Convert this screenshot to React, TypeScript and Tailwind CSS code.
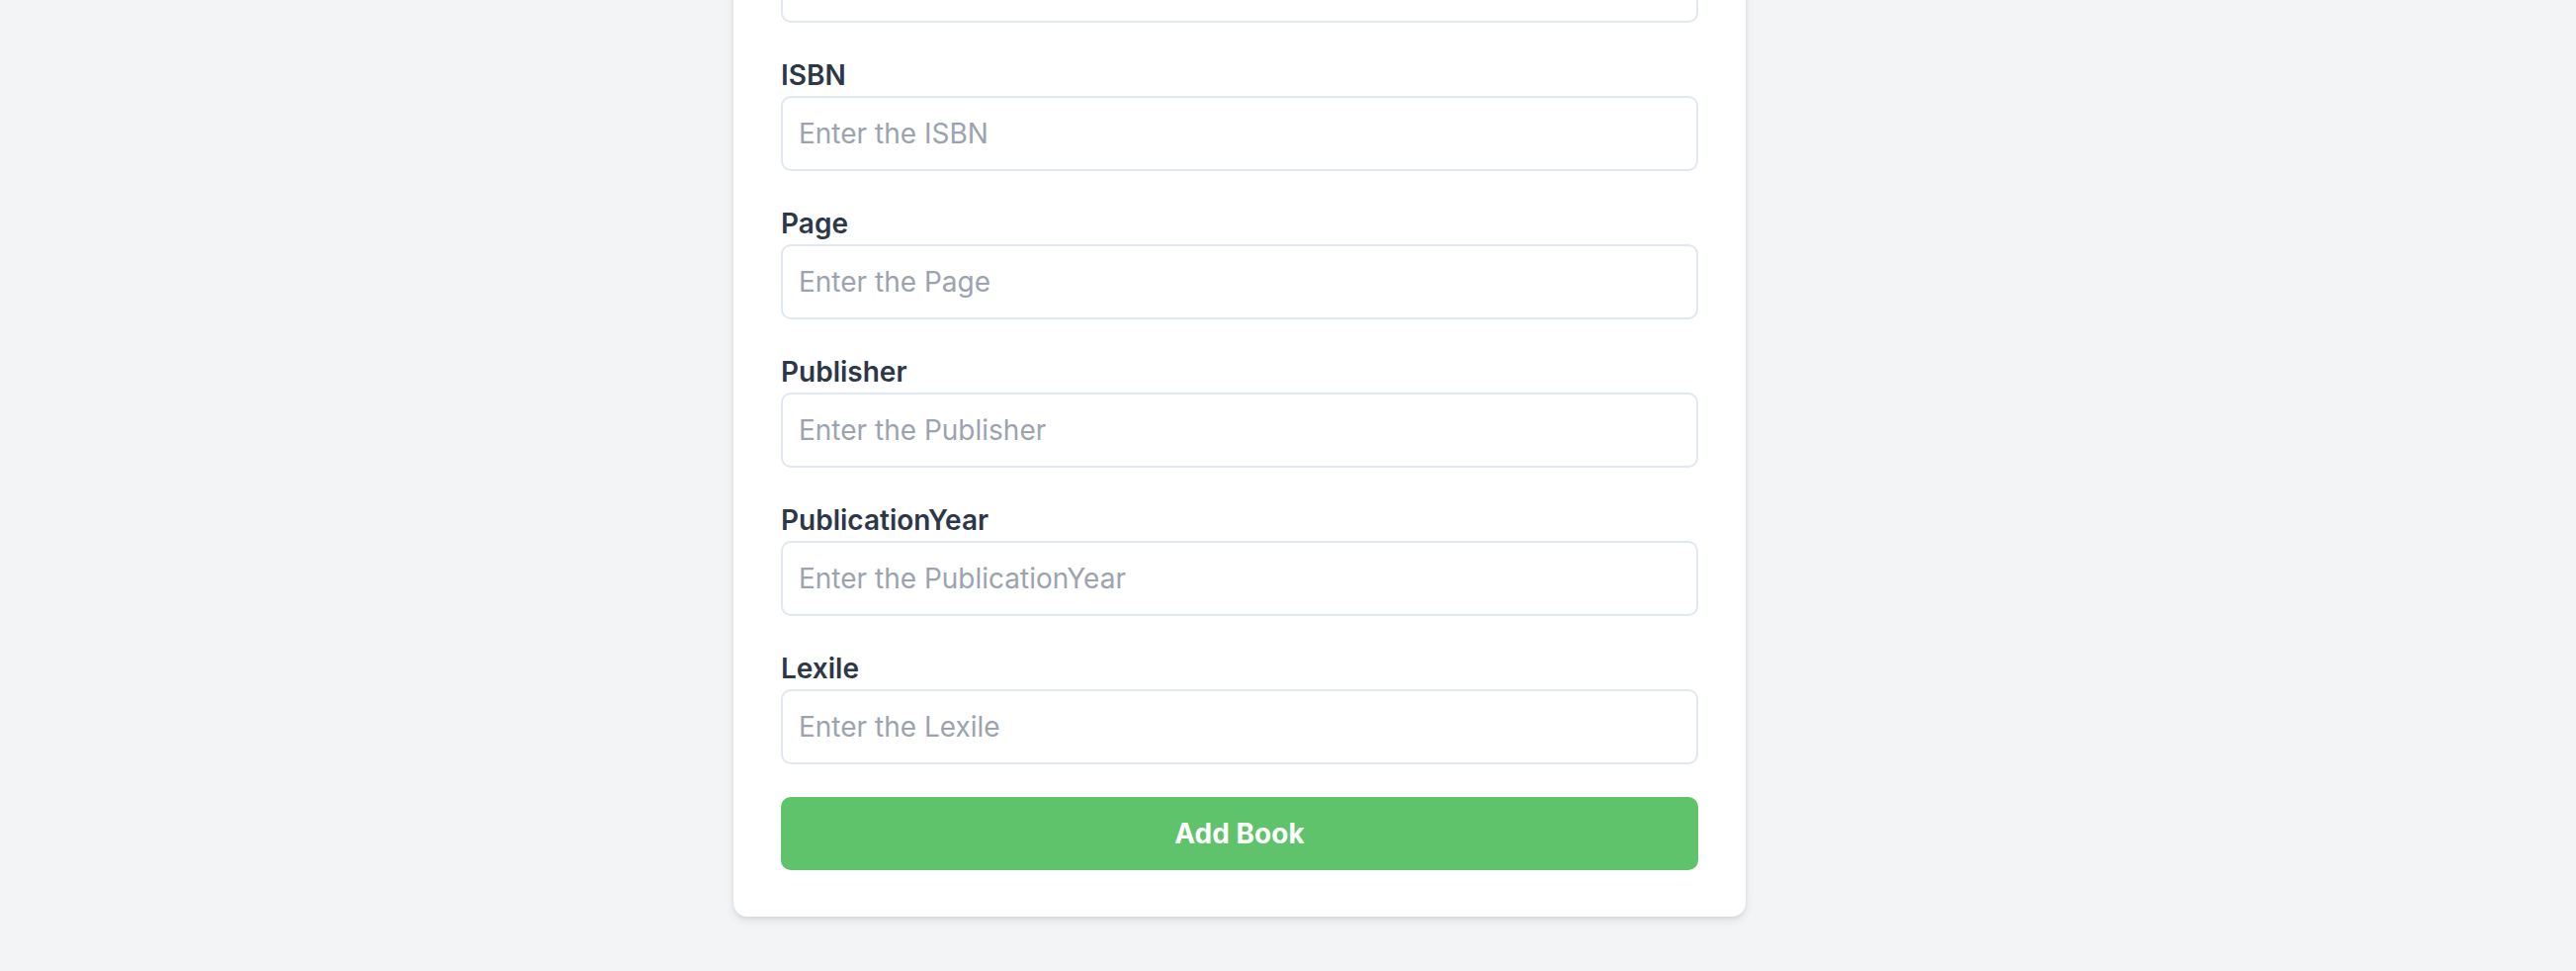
import React from 'react';

const fields = ['ISBN', 'Page', 'Publisher', 'PublicationYear', 'Lexile'];

const App: React.FC = () => {
  return (
    <div
      className="min-h-screen bg-[#f3f4f6] overflow-hidden"
      style={{ fontFamily: 'Inter, "Noto Sans", sans-serif' }}
    >
      <div className="ml-[742px] w-[1024px] -mt-[139px] mb-[55px]">
        <form className="bg-white rounded-[14px] shadow-[0_4px_10px_rgba(0,0,0,0.08),0_2px_4px_rgba(0,0,0,0.06)] px-12 pt-12 pb-[47px]">
          <div className="flex flex-col gap-[36px]">
            {/* scrolled out of view */}
            <div>
              <label className="block text-[28px] leading-[34px] font-semibold text-[#2d3748] mb-1">
                Author
              </label>
              <input
                type="text"
                className="w-full h-[76px] border-2 border-[#e2e8f0] rounded-[10px] px-4 text-[28px] outline-none"
              />
            </div>
            {fields.map((field) => (
              <div key={field}>
                <label className="block text-[28px] leading-[34px] font-semibold text-[#2d3748] mb-1">
                  {field}
                </label>
                <input
                  type="text"
                  placeholder={`Enter the ${field}`}
                  className="w-full h-[76px] border-2 border-[#e2e8f0] rounded-[10px] px-4 text-[28px] text-[#2d3748] placeholder:text-[#9ca3af] outline-none"
                />
              </div>
            ))}
          </div>
          <button
            type="button"
            className="mt-[33px] w-full h-[74px] rounded-[10px] bg-[#5ec36a] text-white text-[28px] font-bold"
          >
            Add Book
          </button>
        </form>
      </div>
    </div>
  );
};

export default App;
